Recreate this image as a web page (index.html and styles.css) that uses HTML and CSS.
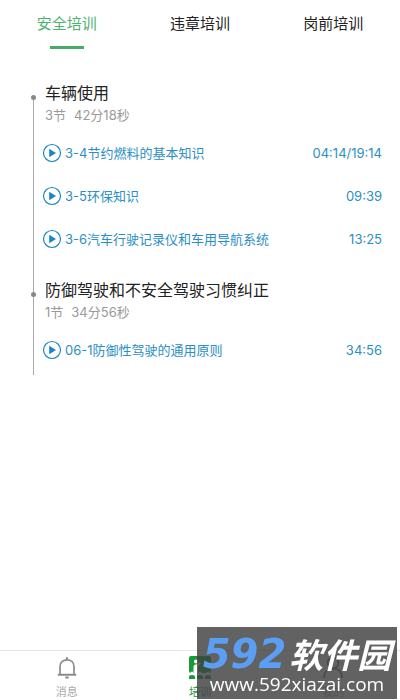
FILE: index.html
```html
<!DOCTYPE html>
<html lang="zh-CN">
<head>
<meta charset="utf-8">
<meta name="viewport" content="width=device-width, initial-scale=1">
<title>安全培训</title>
<link rel="stylesheet" href="styles.css">
</head>
<body>
<svg class="defs" aria-hidden="true">
  <symbol id="play" viewBox="0 0 20 20">
    <circle cx="10" cy="10" r="8.5" fill="none" stroke="currentColor" stroke-width="1.2"/>
    <path d="M7.200 5.800 14 10 7.200 14.200Z" fill="currentColor"/>
  </symbol>
</svg>
<nav class="tabs">
  <a class="tab active" href="#safety">安全培训</a>
  <a class="tab" href="#violation">违章培训</a>
  <a class="tab" href="#prejob">岗前培训</a>
</nav>
<main class="timeline">
  <section class="chapter">
    <h2>车辆使用</h2>
    <p class="meta"><span>3节</span><span>42分18秒</span></p>
    <ul class="lessons">
      <li><a href="#l34"><svg class="play"><use href="#play"/></svg><span class="name">3-4节约燃料的基本知识</span><span class="time">04:14/19:14</span></a></li>
      <li><a href="#l35"><svg class="play"><use href="#play"/></svg><span class="name">3-5环保知识</span><span class="time">09:39</span></a></li>
      <li><a href="#l36"><svg class="play"><use href="#play"/></svg><span class="name">3-6汽车行驶记录仪和车用导航系统</span><span class="time">13:25</span></a></li>
    </ul>
  </section>
  <section class="chapter">
    <h2>防御驾驶和不安全驾驶习惯纠正</h2>
    <p class="meta"><span>1节</span><span>34分56秒</span></p>
    <ul class="lessons">
      <li><a href="#l61"><svg class="play"><use href="#play"/></svg><span class="name">06-1防御性驾驶的通用原则</span><span class="time">34:56</span></a></li>
    </ul>
  </section>
</main>
<nav class="bottom">
  <a href="#messages">
    <svg viewBox="0 0 24 24" fill="none" stroke="#8c8c8c" stroke-width="1.700"><path d="M5 18.500V10.500C5 6.300 8 3.800 12 3.800s7 2.500 7 6.700v8"/><path d="M2.800 18.700h18.400M12 1.300v2.500M10.300 21.500h3.400" stroke-width="2"/></svg>
    <span>消息</span>
  </a>
  <a class="current" href="#training">
    <svg viewBox="0 0 24 24"><rect x="1" y="0" width="22" height="17" rx="2" fill="#179a3b"/><circle cx="8" cy="5.500" r="2" fill="#fff"/><path d="M5.500 17V10.500Q5.500 8.500 8 8.500l4-2 .7 1-2.700 2.500v7Z" fill="#fff"/><path d="M1 23v-2q0-2 3-2t3 2v2ZM9 23v-2q0-2 3-2t3 2v2ZM17 23v-2q0-2 3-2t3 2v2Z" fill="#179a3b"/><path d="M2.500 17a1.500 1.500 0 0 1 3 0ZM10.500 17a1.500 1.500 0 0 1 3 0ZM18.500 17a1.500 1.500 0 0 1 3 0Z" fill="#fff"/></svg>
    <span>培训</span>
  </a>
  <a href="#me">
    <svg viewBox="0 0 24 24" fill="none" stroke="#666" stroke-width="1.600"><circle cx="12" cy="7" r="5.500"/><path d="M3 22c0-6 3.500-9.500 9-9.500s9 3.500 9 9.500"/></svg>
    <span>我的</span>
  </a>
</nav>
<aside class="watermark">
  <div class="brand"><span class="num">592</span><span class="word">软件园</span></div>
  <div class="url">www.592xiazai.com</div>
</aside>
</body>
</html>
```

FILE: styles.css
```css
* { box-sizing: border-box; }
body {
  margin: 0;
  min-height: 100vh;
  display: flex;
  flex-direction: column;
  background: #fff;
  color: #222;
  font-family: Inter, "Noto Sans CJK SC", sans-serif;
}
a { color: inherit; text-decoration: none; }
h2, p, ul { margin: 0; padding: 0; }
ul { list-style: none; }
.defs { display: none; }

.tabs { display: grid; grid-template-columns: repeat(3, 1fr); padding-top: 12px; }
.tab {
  display: flex;
  flex-direction: column;
  align-items: center;
  gap: 10px;
  font-size: 15px;
  line-height: 24px;
}
.tab.active { color: #4db36e; }
.tab.active::after { content: ""; width: 34px; height: 3px; background: #45ae66; }

.timeline { flex: 1; padding: 32px 18px 0 33px; }
.chapter { position: relative; padding-left: 12px; }
.chapter::before {
  content: "";
  position: absolute;
  left: 0;
  top: 16px;
  bottom: -34px;
  width: 1px;
  background: #aaa;
}
.chapter:last-child::before { bottom: 0; }
.chapter::after {
  content: "";
  position: absolute;
  left: -2px;
  top: 14px;
  width: 5px;
  height: 5px;
  border-radius: 50%;
  background: #888;
}
.chapter h2 { font-size: 16px; font-weight: 400; line-height: 24px; }
.meta { display: flex; gap: 8px; color: #999; font-size: 13px; line-height: 20px; }
.lessons { padding-top: 6px; margin-left: -3px; }
.lessons a {
  display: flex;
  align-items: center;
  gap: 3px;
  height: 43px;
  color: #2b8fc4;
  font-size: 13px;
}
.play { width: 20px; height: 20px; flex: none; color: #1c86c2; }
.name { flex: 1; }
.chapter + .chapter { margin-top: 18px; }
.chapter:last-child { padding-bottom: 4px; }

.bottom {
  display: grid;
  grid-template-columns: repeat(3, 1fr);
  border-top: 1px solid #e8e8e8;
  padding-top: 5px;
}
.bottom a {
  display: flex;
  flex-direction: column;
  align-items: center;
  gap: 4px;
  color: #aaa;
  font-size: 11px;
  line-height: 16px;
}
.bottom svg { width: 24px; height: 24px; }
.bottom .current { color: #179a3b; }

.watermark {
  position: fixed;
  right: 3px;
  bottom: 1px;
  width: 200px;
  height: 72px;
  padding-top: 8px;
  background: rgba(64, 64, 64, 0.82);
  color: #fff;
  text-align: center;
}
.brand { display: flex; justify-content: center; align-items: center; gap: 3px; height: 38px; line-height: 36px; font-weight: 700; font-style: italic; }
.num { color: #5b9ff5; font-family: "DejaVu Sans", sans-serif; font-size: 40px; }
.word { font-family: "Noto Sans CJK SC", sans-serif; font-size: 34px; }
.url { font-family: "Open Sans", "Noto Sans", sans-serif; font-weight: 500; font-size: 19px; line-height: 22px; }
```
